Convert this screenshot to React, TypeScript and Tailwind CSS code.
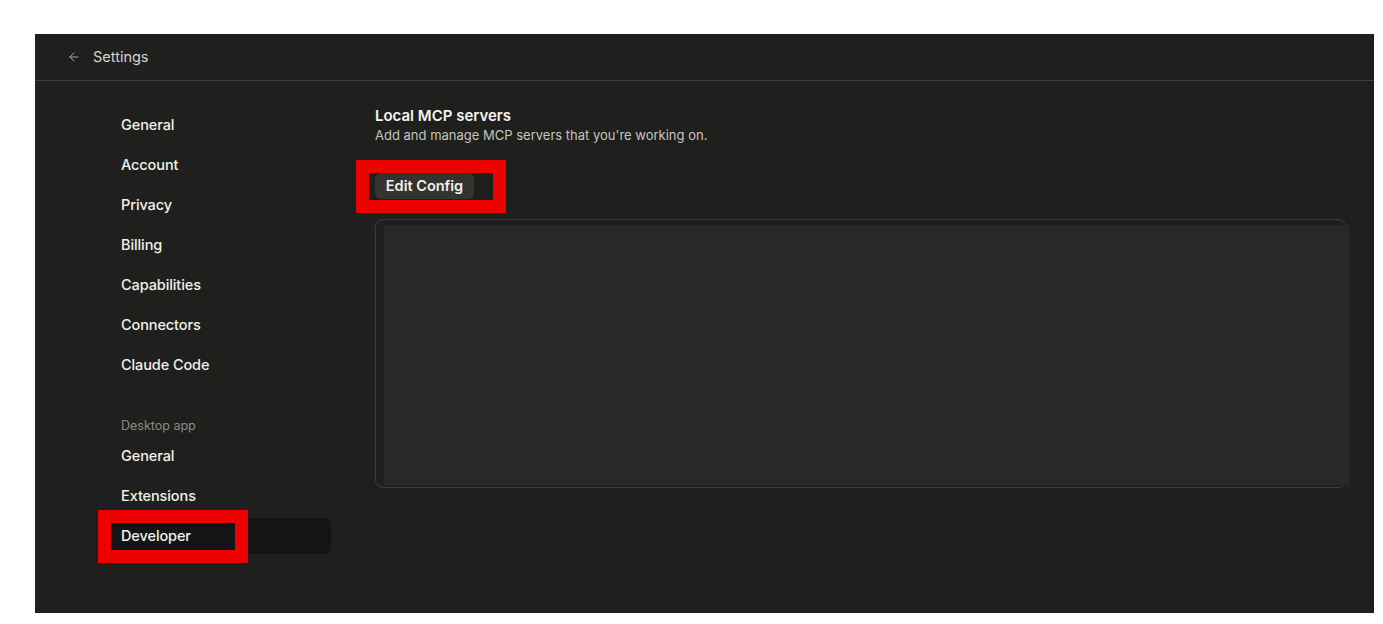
import { ArrowLeft } from 'lucide-react';

const accountItems = ['General', 'Account', 'Privacy', 'Billing', 'Capabilities', 'Connectors', 'Claude Code'];
const desktopItems = ['General', 'Extensions', 'Developer'];

function NavItem({ label, active }: { label: string; active?: boolean }) {
  return (
    <div
      className={`h-9 flex items-center pl-[23px] rounded-lg text-[14.5px] tracking-[-0.1px] font-medium text-[#f3f1ea] ${
        active ? 'bg-[#141414]' : ''
      }`}
    >
      {label}
    </div>
  );
}

export default function App() {
  return (
    <div className="relative w-[1383px] h-[624px] bg-white overflow-hidden" style={{ fontFamily: 'Inter, "Noto Sans", sans-serif' }}>
      <div className="absolute left-[35px] top-[34px] w-[1339px] h-[579px] bg-[#1f1f1e] flex flex-col">
        {/* top bar */}
        <div className="h-[47px] shrink-0 flex items-center gap-[12px] pl-[32px] border-b border-[#3e3e3c]">
          <ArrowLeft size={14} strokeWidth={1.6} className="text-[#b5b3ad]" />
          <span className="text-[14.5px] text-[#d6d4cd]">Settings</span>
        </div>

        <div className="flex flex-1 min-h-0">
          {/* sidebar */}
          <nav className="w-[233px] ml-[63px] pt-[26px] flex flex-col gap-1 shrink-0">
            {accountItems.map((item) => (
              <NavItem key={item} label={item} />
            ))}
            <div className="mt-[31px] pl-[23px] h-4 flex items-center text-[12.5px] text-[#8d8b85]">Desktop app</div>
            {desktopItems.map((item) => (
              <NavItem key={item} label={item} active={item === 'Developer'} />
            ))}
          </nav>

          {/* main */}
          <main className="flex-1 ml-[44px] mr-[28px] pt-[25px]">
            <h2 className="text-[15px] leading-5 font-semibold text-[#f6f4ee]">Local MCP servers</h2>
            <p className="text-[13px] leading-[18px] text-[#c7c5bd]">Add and manage MCP servers that you're working on.</p>
            <button className="mt-[29px] h-[26px] w-[99px] rounded-md bg-[#333331] text-[14.5px] font-semibold text-[#f3f1ea] flex items-center justify-center">
              Edit Config
            </button>
            <div className="mt-[20px] h-[269px] rounded-lg border border-[#3c3c3a]">
              <div className="ml-[8px] mt-[5px] mr-[-4px] h-[260px] bg-[#282828]" />
            </div>
          </main>
        </div>
      </div>

      {/* highlight markers */}
      <div className="absolute left-[356px] top-[160px] w-[150px] h-[53px] border-[13px] border-[#ec0000]" />
      <div className="absolute left-[98px] top-[510px] w-[150px] h-[53px] border-[13px] border-[#ec0000]" />
    </div>
  );
}
